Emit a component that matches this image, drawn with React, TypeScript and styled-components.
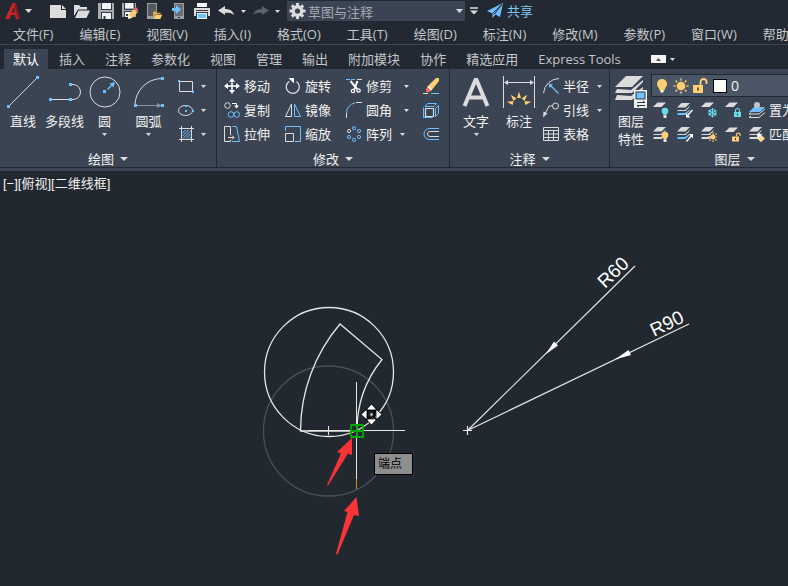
import React from "react";
import styled, { createGlobalStyle } from "styled-components";

const c = {
  bar: "#222932",
  panel: "#3b4453",
  line: "#222932",
  text: "#f2f2f2",
  soft: "#c4c7cb",
  icon: "#dcdcdc",
  blue: "#6ec1ff",
  gold: "#ffce73",
  cyan: "#6cdbe8",
};

const GlobalStyle = createGlobalStyle`
  *, *::before, *::after { box-sizing: border-box; }
  body {
    margin: 0;
    overflow: hidden;
    background: #212830;
    color: ${c.text};
    font: 13px/16px "Open Sans", "Noto Sans CJK SC", sans-serif;
  }
  button, select {
    margin: 0;
    padding: 0;
    border: 0;
    background: transparent;
    color: inherit;
    font: inherit;
    white-space: nowrap;
  }
  select { appearance: none; outline: none; }
  option { color: #222; }
  svg { display: block; flex: none; }
`;

const Window = styled.div`
  display: flex;
  flex-direction: column;
  min-height: 100vh;
`;

/* ---------- quick access bar ---------- */

const QuickBar = styled.header`
  display: flex;
  align-items: center;
  height: 22px;
  padding-left: 5px;
  background: ${c.bar};
  overflow: hidden;
`;

const AppButton = styled.button`
  display: flex;
  align-items: center;
  gap: 4px;
  width: 45px;
`;

const QuickTools = styled.div`
  display: flex;
  gap: 8px;
`;

const ArrowButton = styled.button<{ $width?: number }>`
  display: flex;
  flex: none;
  align-items: center;
  justify-content: center;
  width: ${(p) => p.$width ?? 16}px;
  height: 16px;
`;

const Workspace = styled.label`
  display: flex;
  flex: none;
  align-items: center;
  gap: 2px;
  width: 178px;
  height: 20px;
  margin-left: 1px;
  padding: 0 2px;
  background: ${c.panel};
  color: #a3a8af;
`;

const WorkspaceSelect = styled.select`
  flex: 1;
  min-width: 0;
  height: 20px;
  padding-top: 2px;
`;

const ShareButton = styled.button`
  display: flex;
  align-items: center;
  gap: 4px;
  margin-left: 4px;
  color: #7fc8f5;
`;

/* ---------- menu and tabs ---------- */

const MenuBar = styled.nav`
  display: flex;
  gap: 26px;
  height: 23px;
  padding: 2px 0 0 13px;
  border-bottom: 1px solid ${c.panel};
  background: ${c.bar};
  color: ${c.soft};
  overflow: hidden;
`;

const MenuItem = styled.button`
  flex: none;
  line-height: 20px;
`;

const TabBar = styled.div`
  display: flex;
  align-items: flex-end;
  gap: 2px;
  height: 24px;
  padding-left: 4px;
  background: ${c.bar};
`;

const Tab = styled.button<{ $active?: boolean }>`
  height: 20px;
  padding: 0 9px;
  line-height: 20px;
  color: ${(p) => (p.$active ? "#ffffff" : c.soft)};
  background: ${(p) => (p.$active ? c.panel : "transparent")};
`;

const CollapseButton = styled.button`
  display: flex;
  align-items: center;
  gap: 4px;
  height: 20px;
  margin-left: 19px;
`;

/* ---------- ribbon ---------- */

const Ribbon = styled.section`
  display: flex;
  height: 102px;
  border-bottom: 3px solid ${c.panel};
  background: ${c.panel};
  overflow: hidden;
`;

const Panel = styled.section<{ $width: number }>`
  display: flex;
  flex: none;
  flex-direction: column;
  justify-content: space-between;
  width: ${(p) => p.$width}px;
  border-right: 1px solid ${c.line};
  border-bottom: 1px solid ${c.line};
  padding-top: 5px;
`;

const PanelBody = styled.div<{ $columns: string; $indent: number }>`
  display: grid;
  grid-template-columns: ${(p) => p.$columns};
  padding-left: ${(p) => p.$indent}px;
`;

const PanelTitle = styled.button`
  display: flex;
  align-items: center;
  align-self: center;
  gap: 6px;
  height: 17px;
`;

const BigButton = styled.button`
  display: flex;
  flex-direction: column;
  align-items: center;
  height: 74px;
  padding-top: 2px;
  line-height: 18px;
`;

const BigLabel = styled.span`
  padding: 4px 0 3px;
`;

const SmallGrid = styled.div<{ $columns: string }>`
  display: grid;
  grid-template-columns: ${(p) => p.$columns};
  grid-auto-rows: 24px;
`;

const SmallButton = styled.button<{ $wide?: boolean }>`
  display: flex;
  align-items: center;
  justify-content: flex-start;
  gap: 4px;

  & > span {
    padding-right: ${(p) => (p.$wide ? 8 : 4)}px;
  }
`;

const LayerColumn = styled.div`
  min-width: 0;
`;

const LayerCombo = styled.div`
  display: flex;
  align-items: center;
  gap: 4px;
  height: 23px;
  padding-left: 2px;
  border: 1px solid ${c.line};
  background: #4a5566;
`;

const LayerToggle = styled.button`
  display: flex;
  justify-content: center;
  width: 15px;
`;

const Swatch = styled.span`
  width: 14px;
  height: 14px;
  margin-left: 2px;
  border: 1px solid #000;
  background: #fff;
`;

const LayerSelect = styled.select`
  flex: 1;
  height: 20px;
  font-size: 14px;
`;

const LayerTools = styled.div`
  display: grid;
  grid-template-columns: repeat(4, 24px) 1fr;
  grid-auto-rows: 24px;
  padding: 1px 0 0 2px;
`;

/* ---------- drawing area ---------- */

const DrawingArea = styled.main`
  position: relative;
  flex: 1;
  background: #212830;
`;

const ViewControls = styled.div`
  position: absolute;
  top: 5px;
  left: 3px;
  display: flex;
  font-family: "Liberation Sans", "Noto Sans CJK SC", sans-serif;
`;

const SnapTip = styled.div`
  position: absolute;
  top: 282px;
  left: 374px;
  width: 39px;
  height: 22px;
  padding-left: 3px;
  border: 1px solid #000;
  background: #8e8e8e;
  color: #000;
  font-size: 12px;
  line-height: 20px;
`;

/* ---------- icons ---------- */

type Kids = { children: React.ReactNode; w?: number; h?: number };

const Ico = ({ children, w = 16, h = 16 }: Kids) => (
  <svg
    width={w}
    height={h}
    viewBox={`0 0 ${w} ${h}`}
    fill="none"
    stroke={c.icon}
    aria-hidden="true"
  >
    {children}
  </svg>
);

const Caret = ({ size = 5 }: { size?: number }) => (
  <svg width={size} height={Math.ceil(size / 2)} viewBox="0 0 10 5" preserveAspectRatio="none" aria-hidden="true">
    <path d="M0 0h10L5 5z" fill={c.icon} />
  </svg>
);

const Dot = ({ x, y, s = 3 }: { x: number; y: number; s?: number }) => (
  <rect x={x - s / 2} y={y - s / 2} width={s} height={s} fill={c.blue} stroke="none" />
);

const Sheet = ({ y, fill = c.icon, x = 0 }: { y: number; fill?: string; x?: number }) => (
  <path d={`M${x + 4.5} ${y}H${x + 13}L${x + 8.5} ${y + 4.5}H${x}z`} fill={fill} stroke="none" />
);

const Sheets = ({ fill = c.icon }: { fill?: string }) => (
  <g stroke="none">
    <Sheet y={1} />
    <path d="M1.5 7.5 0 9h8.5L13 4.5h-1L8 8H1z" fill={c.icon} />
    <path d="M1.5 10 0 13h8.5L13 8.5v-1L8 11H1z" fill={fill} />
  </g>
);

const Folder = ({ x, y, s }: { x: number; y: number; s: number }) => (
  <g transform={`translate(${x} ${y}) scale(${s})`} stroke="none">
    <path d="M0 12V1h5l1.5 2H13v2.5H4z" fill={s < 1 ? "#e2a94c" : c.icon} />
    <path d="M4.5 6.5H16L12.5 14H1z" fill={s < 1 ? c.gold : c.icon} />
  </g>
);

const Bulb = ({ x, y, r = 4, fill = c.gold }: { x: number; y: number; r?: number; fill?: string }) => (
  <g stroke="none">
    <circle cx={x} cy={y} r={r} fill={fill} />
    <path d={`M${x - r * 0.7} ${y + r * 0.5}h${r * 1.4}l-1 ${r * 0.8}h-${r * 1.4 - 2}z`} fill={fill} />
    <rect x={x - 1.5} y={y + r + 1} width="3" height="2.5" fill="#fff" />
  </g>
);

const Sun = ({ x, y, r }: { x: number; y: number; r: number }) => (
  <g stroke={c.gold}>
    <circle cx={x} cy={y} r={r} fill={c.gold} stroke="none" />
    {[0, 45, 90, 135, 180, 225, 270, 315].map((a) => (
      <path key={a} d={`M${x} ${y - r - 1}v-${r * 0.55}`} transform={`rotate(${a} ${x} ${y})`} strokeWidth="1.3" />
    ))}
  </g>
);

const Lock = ({ x, y, open, fill }: { x: number; y: number; open?: boolean; fill: string }) => (
  <g>
    <rect x={x} y={y} width="7" height="5" fill={fill} stroke="none" />
    <path d={open ? `M${x + 4.5} ${y}v-1.5a1.8 1.8 0 0 1 3.6 0v1` : `M${x + 1.5} ${y}v-1.5a2 2 0 0 1 4 0v1.5`} stroke={fill} strokeWidth="1.2" />
    <path d={`M${x + 3.5} ${y + 1.5}v2`} stroke="#333b48" />
  </g>
);

const Pencil = () => (
  <g stroke="none">
    <path d="m12 6 3.500 3.500-5.500 5.500-4 .8.800-4z" fill={c.gold} />
    <path d="m12 6 2-2 3 3.500-1.500 2z" fill="#f06a5f" />
    <path d="m6 15.800.800-3.500 2.700 2.700z" fill="#fff" />
  </g>
);

const quickIcons: [string, React.ReactNode][] = [
  ["新建", <path d="M0 2h11v5h5v8H0zM12 2l4 4h-4z" fill={c.icon} stroke="none" />],
  ["打开", <Folder x={0} y={1} s={1} />],
  [
    "保存",
    <g stroke="none">
      <path d="M0 0h16v16H0z" fill="#a9acb0" />
      <path d="M4 0h9v7H4zM4 10h9v6H4z" fill="#f4f4f4" />
      <path d="M3 0h1v6h9V0h1v7H3zM3 9h11v7h-1v-6H4v6H3zM5.500 13h2v3h-2z" fill="#333b46" />
    </g>,
  ],
  [
    "另存为",
    <g stroke="none">
      <path d="M0 0h14v14H0z" fill="#a9acb0" />
      <path d="M3 0h8v5H3zM3 9h6v5H3z" fill="#f4f4f4" />
      <path d="M2 0h1v6h9V0h1v7H2zM2 8h8v1H3v6H2zM4 11h2v2H4z" fill="#333b46" />
      <Pencil />
    </g>,
  ],
  [
    "从移动设备打开",
    <g stroke="none">
      <path d="M1 0h10v16H1z" fill="#9a9da1" />
      <path d="M2 1h8v12H2z" fill="#555a61" />
      <Folder x={7} y={8} s={0.58} />
    </g>,
  ],
  [
    "保存到移动设备",
    <g stroke="none">
      <path d="M4 0h10v16H4z" fill="#9a9da1" />
      <path d="M5 1h8v12H5z" fill="#6a6e74" />
      <path d="M8 14h2v1H8z" fill="#222" />
      <path d="M2 5h4V2l5 4.500L6 11V8H2z" fill={c.blue} />
    </g>,
  ],
  [
    "打印",
    <g stroke="none">
      <path d="M3 0h10v4H3z" fill="#fff" />
      <path d="M0 5h16v8H0z" fill={c.icon} />
      <path d="M2 7h12v1H2zM2 9h12v6H2z" fill="#333b46" />
      <path d="M3 10h10v6H3z" fill="#e4f2fc" />
      <path d="M4 11h8v4H4z" fill={c.blue} />
    </g>,
  ],
  ["放弃", <path d="M0 7.500 7 3v3c5 0 8 2 9 6-2-2-5-2.500-9-2.300V12z" fill={c.icon} stroke="none" />],
];

const LineIcon = () => (
  <Ico w={32} h={32}>
    <path d="M2 30 30 2" />
    <Dot x={1.5} y={30.5} />
    <Dot x={30.5} y={1.5} />
  </Ico>
);

const PolylineIcon = () => (
  <Ico w={32} h={32}>
    <path d="M1 23.500h20M21 8.500h3a7.500 7.500 0 0 1 0 15h-3" />
    <Dot x={1.5} y={23.5} />
    <Dot x={21.5} y={23.5} />
    <Dot x={21.5} y={8.5} />
  </Ico>
);

const CircleIcon = () => (
  <Ico w={32} h={32}>
    <circle cx="16" cy="16" r="15" />
    <path d="m18.500 13.500 4-4" stroke={c.blue} strokeWidth="1.500" />
    <path d="m26 6-1.500 5.500-4-4z" fill={c.blue} stroke="none" />
    <Dot x={15.500} y={15.500} />
  </Ico>
);

const ArcIcon = () => (
  <Ico w={32} h={32}>
    <path d="M2 29A27 27 0 0 1 29 2.500" />
    <path d="M3 29.500h22" stroke="#8d939c" />
    <path d="M24 27v5l5-2.500z" fill="#8d939c" stroke="none" />
    <Dot x={2.5} y={29.5} />
    <Dot x={29.5} y={2.5} />
    <Dot x={29.5} y={29.5} />
  </Ico>
);

const TextIcon = () => (
  <Ico w={32} h={32}>
    <path d="m4.500 30 11-26h1l11 26M8 21.500h16" strokeWidth="4" />
  </Ico>
);

const DimensionIcon = () => (
  <Ico w={32} h={32}>
    <path d="M.5 0v32M31.500 0v32M2 6.500h28" />
    <path d="M1 6.500 5 4v5zM31 6.500 27 4v5z" fill={c.icon} stroke="none" />
    <g fill={c.gold} stroke="none">
      {[-80, -42, 0, 42, 80].map((a) => (
        <path key={a} d="m16 15.500 2 6.500h-4z" transform={`rotate(${a} 16 28)`} />
      ))}
    </g>
  </Ico>
);

const LayerPropsIcon = () => (
  <Ico w={32} h={32}>
    <g fill={c.icon} stroke="none">
      <path d="M11 0h17L17 11H0z" />
      <path d="M2 13 0 17h17L28 6v-2L16 14z" />
      <path d="M2 19 0 24h17L28 13v-2L16 20z" />
      <path d="M19 14h13v18H19z" fill="#f1f1f1" />
      <path d="M20.500 15.500h10v8h-10z" fill="#2d3642" />
      <path d="M21.500 16.500h8v6h-8z" fill={c.blue} />
    </g>
    <path d="M22 26.500h8M28 25l2 1.500M30 29.500h-8M24 31l-2-1.500" stroke="#2d3642" />
  </Ico>
);

const drawSmall: [string, React.ReactNode][] = [
  ["矩形", <><path d="M1.500 3.500h13v10h-13z" /><Dot x={1} y={3} s={2} /><Dot x={15} y={14} s={2} /></>],
  ["椭圆", <><ellipse cx="7.500" cy="8.500" rx="7" ry="5" /><Dot x={8} y={4} s={2} /><Dot x={8} y={9} s={2} /><Dot x={15} y={9} s={2} /></>],
  [
    "图案填充",
    <>
      <path d="M3.500 0v16M13.500 0v16M1 2.500h15M1 13.500h15" />
      <path d="m4.500 7 3-3M4.500 10l6-6M5 12.500l8-8M8 12.500l5-5M11 12.500l2-2" stroke={c.blue} />
    </>,
  ],
];

type Cmd = { name: string; icon: React.ReactNode; arrow?: boolean; wide?: boolean; bare?: boolean };

const modifyTools: Cmd[] = [
  {
    name: "移动",
    icon: (
      <>
        <path d="M8 2v12M2 8h12" stroke="#fff" strokeWidth="1.500" />
        <path d="M8 0 5 4h6zM8 16l-3-4h6zM0 8l4-3v6zM16 8l-4-3v6z" fill="#fff" stroke="none" />
      </>
    ),
  },
  {
    name: "旋转",
    icon: (
      <>
        <path d="M11.500 3.500a6.500 6.500 0 1 1-7-.3" strokeWidth="1.300" />
        <path d="M3.500 0h5.500v5.500z" fill="#fff" stroke="none" />
      </>
    ),
  },
  {
    name: "修剪",
    arrow: true,
    wide: true,
    icon: (
      <>
        <path d="M0 1.500h4M5 1.500h4" stroke={c.blue} />
        <path d="M11 1.500h5" />
        <path d="m4.500 3 6.500 8M11.500 3 8.500 11" stroke="#fff" strokeWidth="2" />
        <circle cx="7" cy="13" r="1.700" stroke="#fff" strokeWidth="1.300" />
        <circle cx="12.500" cy="12.500" r="1.700" stroke="#fff" strokeWidth="1.300" />
      </>
    ),
  },
  {
    name: "删除",
    bare: true,
    icon: (
      <g stroke="none">
        <path d="M13 0 16 0 16 3 8 13 4 9z" fill={c.gold} />
        <path d="M5.500 8 9 11.500 7.500 13 4 9.500z" fill="#fff" />
        <path d="m4.500 9 3.500 3.500L6 14.500 3 14v-3z" fill="#f06a5f" />
        <path d="M0 15h5v1H0z" fill={c.icon} />
        <path d="M8 15h8v1H8z" fill={c.blue} />
      </g>
    ),
  },
  {
    name: "复制",
    icon: (
      <>
        <circle cx="3.500" cy="3.500" r="2.800" />
        <path d="M8 1.500h4.500V4" stroke="#fff" />
        <path d="M10 3.500h5l-2.500 3z" fill="#fff" stroke="none" />
        <circle cx="7" cy="12.500" r="2.800" stroke={c.blue} />
        <circle cx="12.800" cy="12.500" r="2.800" stroke={c.blue} />
      </>
    ),
  },
  {
    name: "镜像",
    icon: (
      <>
        <path d="M6.500 2v12.500h-6z" />
        <path d="M9.500 2v12.500h6z" stroke={c.blue} />
      </>
    ),
  },
  {
    name: "圆角",
    arrow: true,
    wide: true,
    icon: (
      <>
        <path d="M.500 16v-5" />
        <path d="M.500 11A10 10 0 0 1 9 1" stroke={c.blue} />
        <path d="M10 .500h6" />
      </>
    ),
  },
  {
    name: "分解",
    bare: true,
    icon: (
      <>
        <path d="M2.500 6.500h8v8h-8z" strokeWidth="1.200" />
        <path d="M2 4.500 4.500 1.500h9l-2.500 3zM12.500 6.500l3-3v8l-3 3zM.5 5.500v10h9" stroke={c.blue} />
      </>
    ),
  },
  {
    name: "拉伸",
    icon: (
      <>
        <path d="M6.500 9V.500h-6v15h6V14M4 11.500h6M8 9.500l2 2-2 2" />
        <path d="M8.500.500h4l3 15H8" stroke={c.blue} />
      </>
    ),
  },
  {
    name: "缩放",
    icon: (
      <>
        <path d="M.5 5V.5h15v15H10" stroke={c.blue} />
        <path d="M.5 7.500h8v8h-8z" />
      </>
    ),
  },
  {
    name: "阵列",
    arrow: true,
    icon: (
      <>
        {[
          [8, 2.2], [13, 5], [13, 11], [8, 13.8], [3, 11],
        ].map(([x, y]) => (
          <circle key={`${x}${y}`} cx={x} cy={y} r="1.600" stroke={c.blue} />
        ))}
        <circle cx="3" cy="5" r="1.600" />
      </>
    ),
  },
  {
    name: "偏移",
    bare: true,
    icon: (
      <>
        <path d="M16 2.500H6.500a5.500 5.500 0 0 0 0 11H16" stroke={c.blue} />
        <path d="M16 5.500H7a2.500 2.500 0 0 0 0 5h9" />
      </>
    ),
  },
];

const annotateTools: Cmd[] = [
  {
    name: "半径",
    arrow: true,
    icon: (
      <>
        <path d="M.5 15A16 16 0 0 1 16 .5" />
        <path d="m7 7 8.500 8.500" stroke={c.blue} strokeWidth="1.300" />
        <path d="m5.500 5.500 4.500 1L6.500 10z" fill={c.blue} stroke="none" />
      </>
    ),
  },
  {
    name: "引线",
    arrow: true,
    icon: (
      <>
        <circle cx="12.500" cy="4" r="3" />
        <path d="M9.500 4H6L2 12" />
        <path d="M0 15.500.500 9.500l4 2z" fill={c.icon} stroke="none" />
      </>
    ),
  },
  {
    name: "表格",
    icon: <path d="M.5 1.500h15v13H.5zM.5 4.500h15M.5 8h15M.5 11.500h15M5.500 4.500v10M10.500 4.500v10" />,
  },
];

const layerTools: Cmd[] = [
  { name: "关", bare: true, icon: <><Sheet y={0.5} /><Bulb x={12} y={9} r={3.3} fill={c.cyan} /></> },
  {
    name: "隔离",
    bare: true,
    icon: <><Sheets fill={c.blue} /><path d="m15.500 8-5 5.500" stroke="#fff" strokeWidth="1.300" /><path d="M9 15.500v-4.500l4.500 4.500z" fill="#fff" stroke="none" /></>,
  },
  {
    name: "冻结",
    bare: true,
    icon: (
      <>
        <Sheet y={0.5} />
        {[0, 60, 120].map((a) => (
          <path key={a} d="M11.500 6v9.500M9.800 7l1.700 1.500L13.200 7M9.800 14.500l1.700-1.500 1.700 1.500" stroke={c.cyan} transform={`rotate(${a} 11.500 10.700)`} />
        ))}
      </>
    ),
  },
  { name: "锁定", bare: true, icon: <><Sheet y={0.5} /><Lock x={9} y={10} fill={c.cyan} /></> },
  {
    name: "置为当前",
    icon: (
      <>
        <path d="M2 10.500 0 12h10l6-5M2 14 0 15.500h10l6-5" stroke={c.icon} />
        <path d="M5 5h11l-5 5H0z" fill={c.blue} stroke="none" />
        <circle cx="8" cy="3" r="3" fill="#c4c4c4" stroke="none" />
      </>
    ),
  },
  { name: "打开所有图层", bare: true, icon: <><Sheets /><Bulb x={12} y={9} r={3.3} /></> },
  {
    name: "取消隔离",
    bare: true,
    icon: <><Sheets fill={c.blue} /><path d="m9.500 15.500 5-6" stroke="#fff" strokeWidth="1.300" /><path d="M16 8v4.500L11.500 8z" fill="#fff" stroke="none" /></>,
  },
  { name: "解冻所有图层", bare: true, icon: <><Sheets /><Sun x={12} y={11} r={2.5} /></> },
  { name: "解锁", bare: true, icon: <><Sheet y={1.5} /><Lock x={7} y={10.5} open fill={c.gold} /></> },
  {
    name: "匹配图层",
    icon: (
      <>
        <Sheets />
        <path d="m8 9 2-2 3 2-4 4z" fill="#fff" stroke="none" />
        <path d="m9 13 4-3.500 3 3-4 3.500z" fill={c.gold} stroke="none" />
        <path d="m9 12 3 3.500M11 10l3 3.500" stroke="#fff" />
      </>
    ),
  },
];

const menus = [
  "文件(F)", "编辑(E)", "视图(V)", "插入(I)", "格式(O)", "工具(T)",
  "绘图(D)", "标注(N)", "修改(M)", "参数(P)", "窗口(W)", "帮助(H)",
];

const tabs = [
  "默认", "插入", "注释", "参数化", "视图", "管理",
  "输出", "附加模块", "协作", "精选应用", "Express Tools",
];

const Command = ({ name, icon, arrow, wide, bare }: Cmd) => (
  <SmallButton type="button" $wide={wide} aria-label={name}>
    <Ico>{icon}</Ico>
    {!bare && <span>{name}</span>}
    {arrow && <Caret />}
  </SmallButton>
);

const Big = ({ icon, label, arrow }: { icon: React.ReactNode; label: React.ReactNode; arrow?: boolean }) => (
  <BigButton type="button">
    {icon}
    <BigLabel>{label}</BigLabel>
    {arrow && <Caret />}
  </BigButton>
);

const Title = ({ children }: { children: React.ReactNode }) => (
  <PanelTitle type="button">
    {children}
    <Caret size={8} />
  </PanelTitle>
);

const Drawing = () => (
  <svg width="788" height="415" viewBox="0 171 788 415" fill="none" stroke="#e6e6e6" role="img" aria-label="图形">
    <circle cx="328.500" cy="431" r="65" stroke="#4a5057" strokeWidth="1.300" />
    <circle cx="329" cy="372" r="64.500" strokeWidth="1.300" />
    <path d="M300.500 431A166 166 0 0 1 340 324l42 35.500A113 113 0 0 0 357 431z" strokeWidth="1.300" />
    <path d="M308 430.500h97M356.500 382v97M328.500 426v9" />
    <path d="M356.500 450v29" stroke="#eee3c8" />
    <path d="M356.500 479v10" stroke="#c98f12" />
    <path d="M351 425h12v12h-12zM351 431h12M357 425v12" stroke="#00a800" strokeWidth="1.800" />
    <g stroke="none" fill="#fa3434">
      <path d="M352 438 337 452l4 1.500-14 31.500 1 .500 20-32 4 1.500z" />
      <path d="M356.500 497 344 511l3.500 1-11.500 42 1.500.500L354 515l5 1z" />
    </g>
    <g>
      <path d="M367.500 410.500h7v7h-7z" stroke="#000" strokeWidth="1.500" />
      <path
        d="m371.500 404 5.500 6h-11zM371.500 425l5.500-6h-11zM361 414.500l6-5.500v11zM382 414.500l-6-5.500v11z"
        fill="#fff"
        stroke="#000"
        strokeWidth=".8"
      />
      <path d="M370.500 413.500h2v2h-2z" fill="#fff" stroke="none" />
    </g>
    <path d="M635 266 467.500 430.500 689 324M463 430.500h9M467.500 426v9" strokeWidth="1.200" />
    <g fill="#fff" stroke="none">
      <path d="m546 354 8-12.500 4 4z" />
      <path d="m615 359.500 13.500-9.500 2.500 5z" />
      <g fontFamily="Liberation Sans, Arial, sans-serif" fontSize="19">
        <text transform="translate(605 289) rotate(-44)">R60</text>
        <text transform="translate(654 337) rotate(-26)">R90</text>
      </g>
    </g>
  </svg>
);

export default function App() {
  return (
    <Window>
      <GlobalStyle />
      <QuickBar>
        <AppButton type="button" aria-label="应用程序菜单">
          <Ico>
            <path d="M7.500 0h3L15 16h-4l-1-4H6l-1.500 4H0z M8.700 4 6.800 9.500h3z" fill="#c6262b" fillRule="evenodd" stroke="none" />
            <path d="M10.500 0 15 16h-2L9 3z" fill="#8e1a20" stroke="none" />
          </Ico>
          <Caret size={7} />
        </AppButton>
        <QuickTools>
          {quickIcons.map(([name, icon]) => (
            <button key={name} type="button" aria-label={name}>
              <Ico>{icon}</Ico>
            </button>
          ))}
        </QuickTools>
        <ArrowButton type="button" $width={19} aria-label="放弃列表">
          <Caret />
        </ArrowButton>
        <button type="button" aria-label="重做">
          <Ico>
            <path d="M16 7.500 9 3v3c-5 0-8 2-9 6 2-2 5-2.500 9-2.300V12z" fill="#5d636c" stroke="none" />
          </Ico>
        </button>
        <ArrowButton type="button" $width={17} aria-label="重做列表">
          <Caret />
        </ArrowButton>
        <Workspace>
          <Ico w={17} h={16}>
            <circle cx="8.500" cy="8" r="4.300" strokeWidth="3.400" />
            {[0, 45, 90, 135].map((a) => (
              <path key={a} d="M8.500 0v3M8.500 13v3" strokeWidth="3" transform={`rotate(${a} 8.500 8)`} />
            ))}
          </Ico>
          <WorkspaceSelect aria-label="工作空间" defaultValue="草图与注释">
            <option>草图与注释</option>
          </WorkspaceSelect>
          <Caret size={7} />
        </Workspace>
        <ArrowButton type="button" $width={18} aria-label="自定义快速访问工具栏">
          <Ico w={10} h={8}>
            <path d="M1 1h8" strokeWidth="1.500" />
            <path d="M1 3.500h8L5 7.500z" fill={c.icon} stroke="none" />
          </Ico>
        </ArrowButton>
        <ShareButton type="button">
          <Ico>
            <path d="M0 8 16 0 13 14 8.500 11.500 5.500 15V10.500z" fill={c.blue} stroke="none" />
            <path d="M5.500 10.500 15 1.500 7 11.500" stroke={c.bar} />
          </Ico>
          共享
        </ShareButton>
      </QuickBar>

      <MenuBar>
        {menus.map((m) => (
          <MenuItem key={m} type="button">{m}</MenuItem>
        ))}
      </MenuBar>

      <TabBar role="tablist">
        {tabs.map((t, i) => (
          <Tab key={t} type="button" role="tab" aria-selected={i === 0} $active={i === 0}>{t}</Tab>
        ))}
        <CollapseButton type="button" aria-label="最小化功能区">
          <Ico w={15} h={8}>
            <path d="M0 0h15v8H0z" fill="#f4f4f4" stroke="none" />
            <path d="m7.500 3 2.500 3H5z" fill="#555" stroke="none" />
          </Ico>
          <Caret />
        </CollapseButton>
      </TabBar>

      <Ribbon>
        <Panel $width={217}>
          <PanelBody $columns="40px 43px 37px 51px 1fr" $indent={3}>
            <Big icon={<LineIcon />} label="直线" />
            <Big icon={<PolylineIcon />} label="多段线" />
            <Big icon={<CircleIcon />} label="圆" arrow />
            <Big icon={<ArcIcon />} label="圆弧" arrow />
            <SmallGrid $columns="1fr">
              {drawSmall.map(([name, icon]) => (
                <SmallButton key={name} type="button" aria-label={name}>
                  <Ico w={23}>
                    <g transform="translate(4 0)">{icon}</g>
                  </Ico>
                  <Caret />
                </SmallButton>
              ))}
            </SmallGrid>
          </PanelBody>
          <Title>绘图</Title>
        </Panel>

        <Panel $width={233}>
          <PanelBody $columns="1fr" $indent={7}>
            <SmallGrid $columns="61px 61px 77px 1fr">
              {modifyTools.map((t) => (
                <Command key={t.name} {...t} />
              ))}
            </SmallGrid>
          </PanelBody>
          <Title>修改</Title>
        </Panel>

        <Panel $width={160}>
          <PanelBody $columns="38px 48px 1fr" $indent={7}>
            <Big icon={<TextIcon />} label="文字" arrow />
            <Big icon={<DimensionIcon />} label="标注" />
            <SmallGrid $columns="1fr">
              {annotateTools.map((t) => (
                <Command key={t.name} {...t} />
              ))}
            </SmallGrid>
          </PanelBody>
          <Title>注释</Title>
        </Panel>

        <Panel $width={250}>
          <PanelBody $columns="40px 1fr" $indent={1}>
            <Big icon={<LayerPropsIcon />} label={<>图层<br />特性</>} />
            <LayerColumn>
              <LayerCombo>
                <LayerToggle type="button" aria-label="开/关图层">
                  <Ico><Bulb x={8} y={6} r={5} /></Ico>
                </LayerToggle>
                <LayerToggle type="button" aria-label="冻结/解冻图层">
                  <Ico><Sun x={8} y={8} r={4.300} /></Ico>
                </LayerToggle>
                <LayerToggle type="button" aria-label="锁定/解锁图层">
                  <Ico>
                    <path d="M1 7h10v8H1z" fill={c.gold} stroke="none" />
                    <path d="M8.500 7V4a3 3 0 0 1 6 0v2" stroke={c.gold} strokeWidth="1.800" />
                    <path d="M6 9.500v3" stroke="#333b48" strokeWidth="1.500" />
                  </Ico>
                </LayerToggle>
                <Swatch />
                <LayerSelect aria-label="图层" defaultValue="0">
                  <option>0</option>
                </LayerSelect>
              </LayerCombo>
              <LayerTools>
                {layerTools.map((t) => (
                  <Command key={t.name} {...t} />
                ))}
              </LayerTools>
            </LayerColumn>
          </PanelBody>
          <Title>图层</Title>
        </Panel>
      </Ribbon>

      <DrawingArea>
        <Drawing />
        <ViewControls>
          <button type="button">[−]</button>
          <button type="button">[俯视]</button>
          <button type="button">[二维线框]</button>
        </ViewControls>
        <SnapTip role="tooltip">端点</SnapTip>
      </DrawingArea>
    </Window>
  );
}
